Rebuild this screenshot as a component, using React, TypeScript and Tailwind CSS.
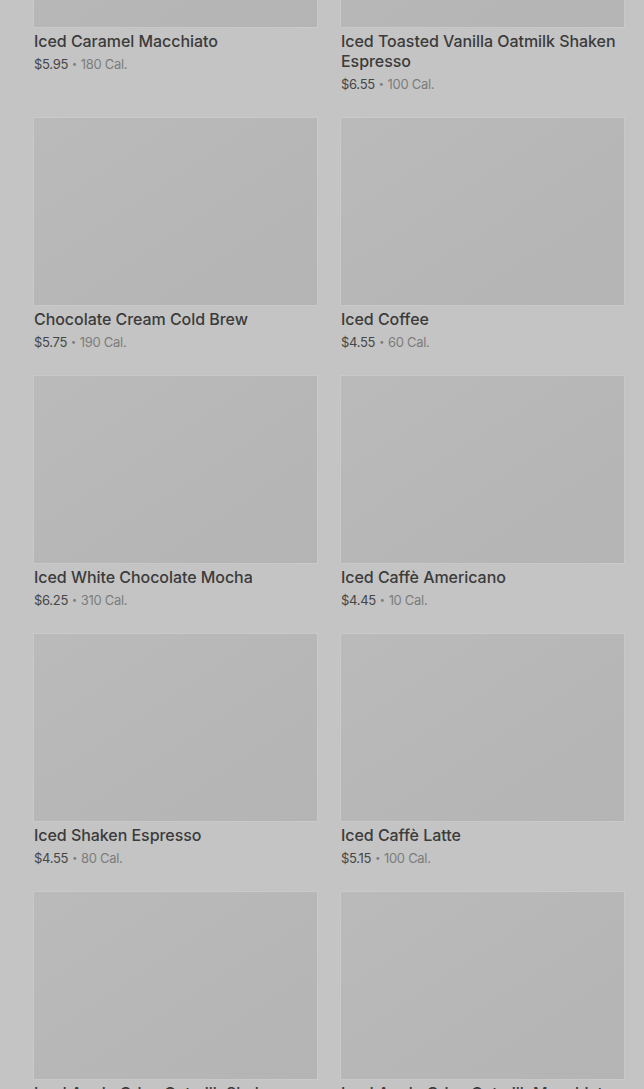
import React from "react";

const items = [
  { name: "Iced Caramel Macchiato", price: "$5.95", cal: "180 Cal." },
  { name: "Iced Toasted Vanilla Oatmilk Shaken Espresso", price: "$6.55", cal: "100 Cal." },
  { name: "Chocolate Cream Cold Brew", price: "$5.75", cal: "190 Cal." },
  { name: "Iced Coffee", price: "$4.55", cal: "60 Cal." },
  { name: "Iced White Chocolate Mocha", price: "$6.25", cal: "310 Cal." },
  { name: "Iced Caffè Americano", price: "$4.45", cal: "10 Cal." },
  { name: "Iced Shaken Espresso", price: "$4.55", cal: "80 Cal." },
  { name: "Iced Caffè Latte", price: "$5.15", cal: "100 Cal." },
  { name: "Iced Apple Crisp Oatmilk Shaken Espresso", price: "$6.55", cal: "140 Cal." },
  { name: "Iced Apple Crisp Oatmilk Macchiato", price: "$6.45", cal: "220 Cal." },
];

export default function App() {
  return (
    <div
      className="w-[644px] h-[1089px] overflow-hidden bg-[#c4c4c4]"
      style={{ fontFamily: "Inter, 'Noto Sans', sans-serif" }}
    >
      <div className="-mt-[160px] pl-[34px] pr-[20px] grid grid-cols-2 gap-x-[24px] gap-y-[24px]">
        {items.map((it) => (
          <div key={it.name} className="flex flex-col">
            <div className="h-[187px] bg-gradient-to-br from-[#bababa] to-[#b4b4b4] outline outline-1 outline-[#c9c9c9]" />
            <div className="mt-[4px] text-[16px] leading-[20px] font-medium text-[#3b3b3b] tracking-[-0.05px]">
              {it.name}
            </div>
            <div className="mt-[3px] flex items-center text-[13px] leading-[20px] text-[#464646] tracking-[-0.3px]">
              <span>{it.price}</span>
              <span className="mx-[4px] text-[9px] text-[#7c7c7c]">•</span>
              <span className="text-[#7c7c7c]">{it.cal}</span>
            </div>
          </div>
        ))}
      </div>
    </div>
  );
}
